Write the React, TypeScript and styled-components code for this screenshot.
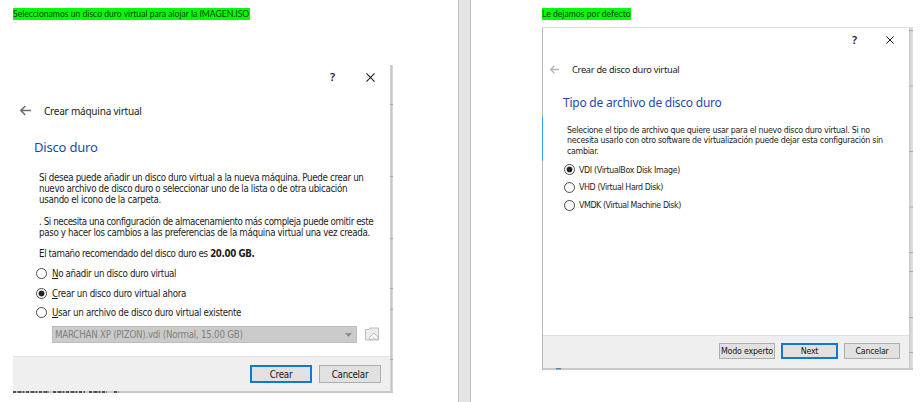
import React from 'react';
import styled, { createGlobalStyle } from 'styled-components';

const Global = createGlobalStyle`
  * { box-sizing: border-box; }
  body { margin: 0; background: #fff; overflow: hidden; }
`;

const TAHOMA = `'DejaVu Sans Condensed', 'DejaVu Sans', sans-serif`;
const SEGOE = `'Noto Sans', 'Open Sans', sans-serif`;

const Spread = styled.div`
  display: grid;
  grid-template-columns: 458px 13px 450px;
  width: 921px;
  height: 402px;
  color: #1c1c1c;
`;

const Page = styled.section<{ $indent: number }>`
  display: flex;
  flex-direction: column;
  align-items: flex-start;
  padding: 8px 0 0 ${(p) => p.$indent}px;
  background: #fff;
`;

const Gutter = styled.div`
  background: #e5e5e5;
  border: solid #bdbdbd;
  border-width: 0 1px;
`;

const Highlight = styled.p<{ $width: number; $gap: number; $track: number }>`
  width: ${(p) => p.$width}px;
  height: 12px;
  margin: 0 0 ${(p) => p.$gap}px;
  background: #00ff00;
  color: #063c06;
  font: 8.6px/12px Lato, sans-serif;
  letter-spacing: ${(p) => p.$track}px;
  white-space: nowrap;
`;

const Text = styled.span<{ $track: number; $bold?: boolean }>`
  letter-spacing: ${(p) => p.$track}px;
  font-weight: ${(p) => (p.$bold ? 700 : 400)};
  white-space: pre;
`;

const Frame = styled.article`
  position: relative;
  display: grid;
`;

const MachineFrame = styled(Frame)`
  width: 380px;
  height: 328px;
  grid-template: 326px 2px / 377px 3px;
  font: 9.7px/11px ${TAHOMA};
`;

const DiskFrame = styled(Frame)`
  width: 371px;
  height: 343px;
  grid-template: 340px 2px / 366px 4px;
  border-top: 1px solid #dcdcdc;
  border-left: 1px solid #b9b9b9;
  font: 8.8px/10.3px ${TAHOMA};
`;

const Body = styled.div`
  display: flex;
  flex-direction: column;
  background: #fff;
`;

const EdgeShade = styled.div<{ $soft?: boolean }>`
  position: relative;
  background: ${(p) =>
    p.$soft
      ? 'linear-gradient(90deg, #c6c6c6, #d3d3d3 30%, #e2e2e2)'
      : 'linear-gradient(90deg, #d6d6d6 33%, #c4c4c4 33% 67%, #d6d6d6 67%)'};
`;

const Tick = styled.i<{ $top: number; $faint?: boolean }>`
  position: absolute;
  left: 0;
  right: 0;
  top: ${(p) => p.$top}px;
  height: ${(p) => (p.$faint ? 2 : 1)}px;
  background: ${(p) => (p.$faint ? '#c6c6c6' : '#aaa')};
`;

const AccentEdge = styled.i`
  position: absolute;
  left: -1px;
  top: 89px;
  width: 1px;
  height: 44px;
  background: #3c9be8;
`;

const BottomEdge = styled.div`
  grid-column: 1 / -1;
  height: 2px;
  background: #c9c9c9;
  svg { display: block; }
`;

const WindowBar = styled.div<{ $height: number; $right: number; $gap: number }>`
  display: flex;
  flex: none;
  justify-content: flex-end;
  align-items: center;
  gap: ${(p) => p.$gap}px;
  height: ${(p) => p.$height}px;
  padding-right: ${(p) => p.$right}px;
  font: 600 11px/14px ${SEGOE};
`;

const TitleRow = styled.header<{ $left: number; $size: number; $gap: number; $top: number }>`
  display: flex;
  flex: none;
  align-items: center;
  gap: ${(p) => p.$gap}px;
  height: 18px;
  margin-top: ${(p) => p.$top}px;
  padding-left: ${(p) => p.$left}px;
  font: ${(p) => p.$size}px/18px ${SEGOE};
  color: #222;
  svg { margin-top: -2px; }
`;

const Heading = styled.h2<{ $size: number; $top: number; $left: number }>`
  margin: ${(p) => p.$top}px 0 0 ${(p) => p.$left}px;
  height: 20px;
  font: 400 ${(p) => p.$size}px/20px ${SEGOE};
  color: #1c4ba6;
`;

const Paragraph = styled.p<{ $top: number; $left: number }>`
  display: flex;
  flex-direction: column;
  margin: ${(p) => p.$top}px 0 0 ${(p) => p.$left}px;
`;

const SizeLine = styled.span`
  display: flex;
`;

const Options = styled.div<{ $top: number; $left: number; $step: number; $gap: number }>`
  display: grid;
  grid-auto-rows: ${(p) => p.$step}px;
  margin: ${(p) => p.$top}px 0 0 ${(p) => p.$left}px;
  label { display: flex; align-items: center; gap: ${(p) => p.$gap}px; }
  u { text-underline-offset: 1px; text-decoration-thickness: 1px; }
`;

const Radio = styled.span<{ $on?: boolean }>`
  width: 11px;
  height: 11px;
  border: 1px solid #4a4a4a;
  border-radius: 50%;
  background: ${(p) => (p.$on ? 'radial-gradient(circle, #222 2.6px, #fff 3.3px)' : '#fff')};
`;

const PickerRow = styled.div`
  display: flex;
  align-items: center;
  gap: 8px;
  margin: 3px 0 0 39px;
`;

const Picker = styled.div`
  display: flex;
  align-items: center;
  justify-content: space-between;
  width: 305px;
  height: 17px;
  padding: 1px 4px 0 2px;
  border: 1px solid #bdbdbd;
  background: #cbcbcb;
  color: #808080;
`;

const Footer = styled.footer<{ $height: number; $right: number; $gap: number; $pad: number }>`
  display: flex;
  justify-content: flex-end;
  align-items: flex-start;
  gap: ${(p) => p.$gap}px;
  height: ${(p) => p.$height}px;
  margin-top: auto;
  padding: ${(p) => p.$pad}px ${(p) => p.$right}px 0 0;
  border-top: 1px solid #e2e2e2;
  background: #efefef;
`;

const Button = styled.button<{ $width: number; $height: number; $primary?: boolean }>`
  display: flex;
  align-items: center;
  justify-content: center;
  width: ${(p) => p.$width}px;
  height: ${(p) => p.$height}px;
  padding: 1px 0 0;
  border: ${(p) => (p.$primary ? '2px solid #0f78d6' : '1px solid #adadad')};
  background: #e1e1e1;
  color: #151515;
  font: inherit;
`;

const Close = ({ size }: { size: number }) => (
  <svg width={size} height={size} viewBox="0 0 10 10" stroke="#222" strokeWidth="1.25">
    <path d="M.5.5l9 9M9.5.5l-9 9" />
  </svg>
);

const Back = ({ width, color }: { width: number; color: string }) => (
  <svg width={width} height={width} viewBox="0 0 10 10" fill="none" stroke={color} strokeWidth="1.4">
    <path d="M10 5H.8M4.8 .9L.8 5l4 4.1" />
  </svg>
);

const Folder = () => (
  <svg width="14" height="14" viewBox="0 0 14 14" fill="#ececec" stroke="#bcbcbc">
    <path d="M.5 2.5H4l1-1.5h8.5v12H.5z" />
    <path d="M4.5 12.5v-2L9 6l4 4.2v2.3h-2.2L9 10.6 7 12.5z" fill="#fafafa" />
  </svg>
);

const Option = ({ text, track, on, mnemonic }: { text: string; track: number; on?: boolean; mnemonic?: boolean }) => (
  <label>
    <Radio $on={on} />
    <Text $track={track}>{mnemonic ? <><u>{text[0]}</u>{text.slice(1)}</> : text}</Text>
  </label>
);

const MachineDialog = () => (
  <MachineFrame>
    <Body>
      <WindowBar $height={24} $right={15} $gap={31}>
        <span>?</span>
        <Close size={9} />
      </WindowBar>
      <TitleRow $top={13} $left={7} $size={10} $gap={13}>
        <Back width={11} color="#6d6d6d" />
        <Text $track={-0.22}>Crear máquina virtual</Text>
      </TitleRow>
      <Heading $size={13} $top={17} $left={21}><Text $track={-0.19}>Disco duro</Text></Heading>
      <Paragraph $top={15} $left={26}>
        <Text $track={-0.333}>Si desea puede añadir un disco duro virtual a la nueva máquina. Puede crear un</Text>
        <Text $track={-0.342}>nuevo archivo de disco duro o seleccionar uno de la lista o de otra ubicación</Text>
        <Text $track={-0.32}>usando el icono de la carpeta.</Text>
      </Paragraph>
      <Paragraph $top={10.5} $left={26}>
        <Text $track={-0.414}>. Si necesita una configuración de almacenamiento más compleja puede omitir este</Text>
        <Text $track={-0.339}>paso y hacer los cambios a las preferencias de la máquina virtual una vez creada.</Text>
      </Paragraph>
      <Paragraph $top={10} $left={26}>
        <SizeLine>
          <Text $track={-0.38}>{'El tamaño recomendado del disco duro es '}</Text>
          <Text $track={-0.363} $bold>20.00 GB.</Text>
        </SizeLine>
      </Paragraph>
      <Options $top={5} $left={23} $step={19.7} $gap={5}>
        <Option mnemonic track={-0.34} text="No añadir un disco duro virtual" />
        <Option mnemonic on track={-0.3} text="Crear un disco duro virtual ahora" />
        <Option mnemonic track={-0.31} text="Usar un archivo de disco duro virtual existente" />
      </Options>
      <PickerRow>
        <Picker>
          <Text $track={-0.25}>MARCHAN XP (PIZON).vdi (Normal, 15.00 GB)</Text>
          <svg width="7" height="4" viewBox="0 0 7 4"><path d="M0 0h7L3.5 4z" fill="#8e8e8e" /></svg>
        </Picker>
        <Folder />
      </PickerRow>
      <Footer $height={35} $right={9} $gap={7} $pad={8}>
        <Button $primary $width={62} $height={18}><Text $track={-0.25}>Crear</Text></Button>
        <Button $width={62} $height={18}><Text $track={-0.25}>Cancelar</Text></Button>
      </Footer>
    </Body>
    <EdgeShade>
      {[39, 111, 173, 223, 244, 294].map((y) => <Tick key={y} $top={y} />)}
    </EdgeShade>
    <BottomEdge>
      <svg width="107" height="2">
        <path d="M0 1h36M40 1h32M76 1h18M101 1h5" stroke="#2b2b20" strokeWidth="1.4" strokeDasharray="3 1.5 4 1 2 1.5" />
      </svg>
    </BottomEdge>
  </MachineFrame>
);

const DiskDialog = () => (
  <DiskFrame>
    <Body>
      <WindowBar $height={24} $right={15} $gap={29}>
        <span>?</span>
        <Close size={8} />
      </WindowBar>
      <TitleRow $top={9} $left={7} $size={9.2} $gap={13}>
        <Back width={9} color="#b4b4b4" />
        <Text $track={-0.25}>Crear de disco duro virtual</Text>
      </TitleRow>
      <Heading $size={12} $top={14} $left={20}><Text $track={-0.235}>Tipo de archivo de disco duro</Text></Heading>
      <Paragraph $top={12} $left={24}>
        <Text $track={-0.288}>Selecione el tipo de archivo que quiere usar para el nuevo disco duro virtual. Si no</Text>
        <Text $track={-0.271}>necesita usarlo con otro software de virtualización puede dejar esta configuración sin</Text>
        <Text $track={-0.306}>cambiar.</Text>
      </Paragraph>
      <Options $top={5} $left={21} $step={17.7} $gap={4}>
        <Option on track={-0.33} text="VDI (VirtualBox Disk Image)" />
        <Option track={-0.39} text="VHD (Virtual Hard Disk)" />
        <Option track={-0.42} text="VMDK (Virtual Machine Disk)" />
      </Options>
      <Footer $height={33} $right={9} $gap={6} $pad={7}>
        <Button $width={56} $height={16}><Text $track={-0.21}>Modo experto</Text></Button>
        <Button $primary $width={57} $height={16}><Text $track={-0.24}>Next</Text></Button>
        <Button $width={56} $height={16}><Text $track={-0.24}>Cancelar</Text></Button>
      </Footer>
    </Body>
    <EdgeShade $soft>
      {[2, 57, 123, 178, 224, 243, 289, 324].map((y) => <Tick key={y} $top={y} $faint={y === 57 || y === 178} />)}
    </EdgeShade>
    <AccentEdge />
    <BottomEdge>
      <svg width="20" height="2"><path d="M13 .7h5" stroke="#4a86bd" strokeWidth="1.4" /></svg>
    </BottomEdge>
  </DiskFrame>
);

export default function App() {
  return (
    <>
      <Global />
      <Spread>
        <Page $indent={13}>
          <Highlight $width={237} $gap={45} $track={0}>Seleccionamos un disco duro virtual para alojar la IMAGEN.ISO</Highlight>
          <MachineDialog />
        </Page>
        <Gutter />
        <Page $indent={71}>
          <Highlight $width={89} $gap={7} $track={0.03}>Le dejamos por defecto</Highlight>
          <DiskDialog />
        </Page>
      </Spread>
    </>
  );
}
